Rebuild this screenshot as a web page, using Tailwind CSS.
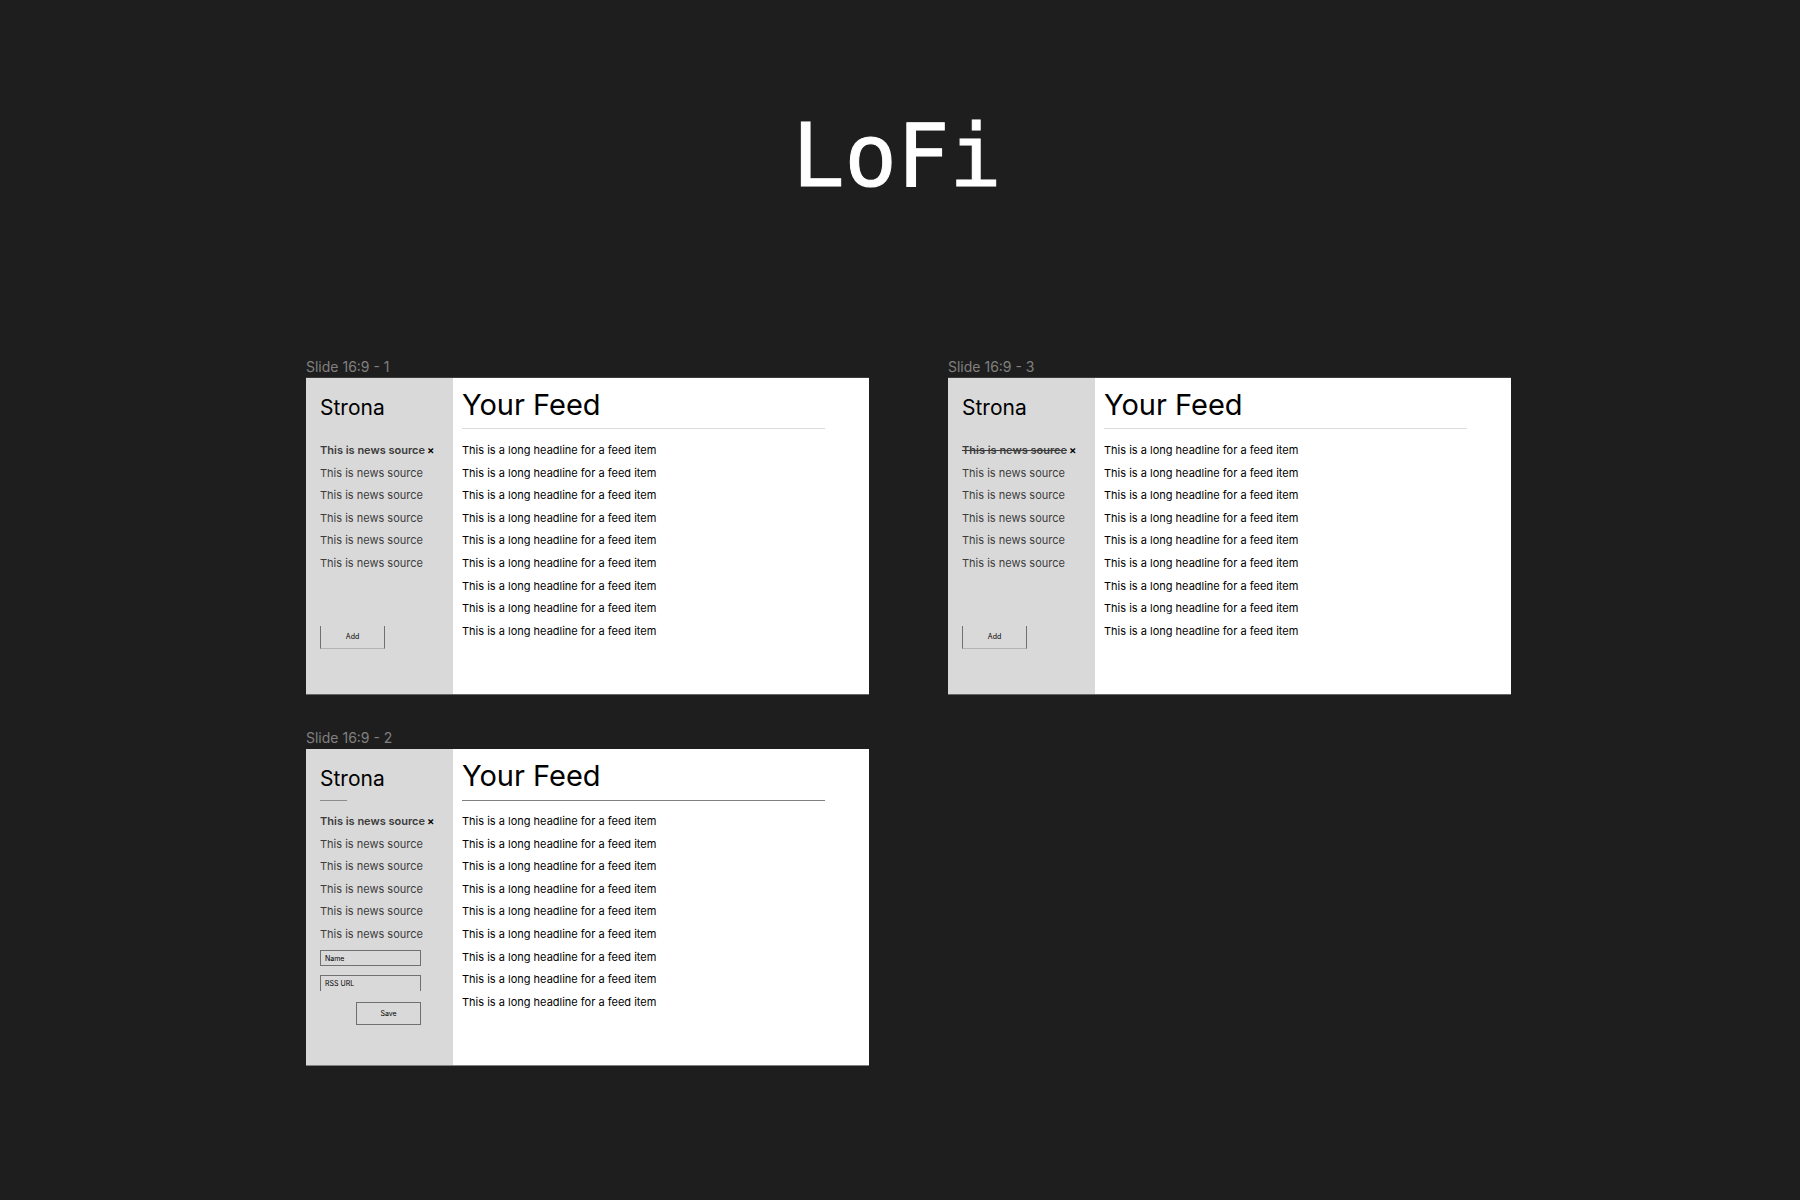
<!DOCTYPE html>
<html lang="en">
<head>
<meta charset="utf-8">
<meta name="viewport" content="width=device-width, initial-scale=1">
<title>LoFi</title>
<script src="https://cdn.jsdelivr.net/npm/@tailwindcss/browser@4"></script>
</head>
<body class="min-h-screen bg-[#1e1e1e] font-['Inter',sans-serif] text-black">
<header class="pt-[106px] pr-[6px] text-center">
  <h1 class="font-['DejaVu_Sans_Mono',monospace] text-[87px] leading-[100px] text-white [-webkit-text-stroke:1px_white]">LoFi</h1>
</header>
<main class="grid grid-cols-2 gap-x-[79px] gap-y-[33px] pt-[150px] pr-[289px] pb-16 pl-[17%]">

  <section>
    <h2 class="h-[22px] text-[14px] leading-[22px] text-[#808080]">Slide 16:9 - 1</h2>
    <div class="flex h-[316px] bg-white shadow-[0_1px_0_#666,0_-1px_0_#3c3c3c]">
      <aside class="w-[147px] shrink-0 bg-[#d9d9d9] pl-[14px]">
        <h3 class="h-[61px] pt-[15px] text-[21px] leading-[30px]">Strona</h3>
        <ul class="grid h-[135px] grid-rows-6 items-center text-[11px] leading-[22px] text-[#3c3c3c]">
          <li class="flex items-center gap-0.5 font-semibold">This is news source <button type="button" aria-label="Remove source" class="font-semibold text-black">×</button></li>
          <li>This is news source</li>
          <li>This is news source</li>
          <li>This is news source</li>
          <li>This is news source</li>
          <li>This is news source</li>
        </ul>
        <button type="button" class="mt-[52px] block h-[23px] w-[65px] border border-t-0 border-[#707070] border-b-[#b4b4b4] text-[7px] leading-[20px]">Add</button>
      </aside>
      <div class="flex-1 pr-[44px] pl-[9px]">
        <h3 class="h-[51px] border-b border-[#dcdcdc] pt-[7px] text-[29px] leading-[40px]">Your Feed</h3>
        <ul class="mt-[10px] grid h-[203px] grid-rows-9 items-center text-[11px] leading-[22px]">
          <li>This is a long headline for a feed item</li>
          <li>This is a long headline for a feed item</li>
          <li>This is a long headline for a feed item</li>
          <li>This is a long headline for a feed item</li>
          <li>This is a long headline for a feed item</li>
          <li>This is a long headline for a feed item</li>
          <li>This is a long headline for a feed item</li>
          <li>This is a long headline for a feed item</li>
          <li>This is a long headline for a feed item</li>
        </ul>
      </div>
    </div>
  </section>

  <section>
    <h2 class="h-[22px] text-[14px] leading-[22px] text-[#808080]">Slide 16:9 - 3</h2>
    <div class="flex h-[316px] bg-white shadow-[0_1px_0_#666,0_-1px_0_#3c3c3c]">
      <aside class="w-[147px] shrink-0 bg-[#d9d9d9] pl-[14px]">
        <h3 class="h-[61px] pt-[15px] text-[21px] leading-[30px]">Strona</h3>
        <ul class="grid h-[135px] grid-rows-6 items-center text-[11px] leading-[22px] text-[#3c3c3c]">
          <li class="flex items-center gap-0.5 font-semibold"><s>This is news source</s> <button type="button" aria-label="Remove source" class="font-semibold text-black">×</button></li>
          <li>This is news source</li>
          <li>This is news source</li>
          <li>This is news source</li>
          <li>This is news source</li>
          <li>This is news source</li>
        </ul>
        <button type="button" class="mt-[52px] block h-[23px] w-[65px] border border-t-0 border-[#707070] border-b-[#b4b4b4] text-[7px] leading-[20px]">Add</button>
      </aside>
      <div class="flex-1 pr-[44px] pl-[9px]">
        <h3 class="h-[51px] border-b border-[#dcdcdc] pt-[7px] text-[29px] leading-[40px]">Your Feed</h3>
        <ul class="mt-[10px] grid h-[203px] grid-rows-9 items-center text-[11px] leading-[22px]">
          <li>This is a long headline for a feed item</li>
          <li>This is a long headline for a feed item</li>
          <li>This is a long headline for a feed item</li>
          <li>This is a long headline for a feed item</li>
          <li>This is a long headline for a feed item</li>
          <li>This is a long headline for a feed item</li>
          <li>This is a long headline for a feed item</li>
          <li>This is a long headline for a feed item</li>
          <li>This is a long headline for a feed item</li>
        </ul>
      </div>
    </div>
  </section>

  <section>
    <h2 class="h-[22px] text-[14px] leading-[22px] text-[#808080]">Slide 16:9 - 2</h2>
    <div class="flex h-[316px] bg-white shadow-[0_1px_0_#808080]">
      <aside class="w-[147px] shrink-0 bg-[#d9d9d9] pl-[14px]">
        <h3 class="h-[51px] pt-[15px] text-[21px] leading-[30px]">Strona</h3>
        <hr class="w-[27px] border-[#8c8c8c]">
        <ul class="mt-[9px] grid h-[135px] grid-rows-6 items-center text-[11px] leading-[22px] text-[#3c3c3c]">
          <li class="flex items-center gap-0.5 font-semibold">This is news source <button type="button" aria-label="Remove source" class="font-semibold text-black">×</button></li>
          <li>This is news source</li>
          <li>This is news source</li>
          <li>This is news source</li>
          <li>This is news source</li>
          <li>This is news source</li>
        </ul>
        <form class="flex w-[101px] flex-col pt-[5px]">
          <input type="text" aria-label="Name" placeholder="Name" class="h-[16px] w-full border border-[#707070] px-1 text-[7px] leading-[14px] placeholder:text-black">
          <input type="text" aria-label="RSS URL" placeholder="RSS URL" class="mt-[9px] h-[16px] w-full border border-b-0 border-[#707070] px-1 text-[7px] leading-[14px] placeholder:text-black">
          <button type="button" class="mt-[11px] h-[23px] w-[65px] self-end border border-[#707070] text-[7px] leading-[20px]">Save</button>
        </form>
      </aside>
      <div class="flex-1 pr-[44px] pl-[9px]">
        <h3 class="h-[52px] border-b border-[#7f7f7f] pt-[7px] text-[29px] leading-[40px]">Your Feed</h3>
        <ul class="mt-[9px] grid h-[203px] grid-rows-9 items-center text-[11px] leading-[22px]">
          <li>This is a long headline for a feed item</li>
          <li>This is a long headline for a feed item</li>
          <li>This is a long headline for a feed item</li>
          <li>This is a long headline for a feed item</li>
          <li>This is a long headline for a feed item</li>
          <li>This is a long headline for a feed item</li>
          <li>This is a long headline for a feed item</li>
          <li>This is a long headline for a feed item</li>
          <li>This is a long headline for a feed item</li>
        </ul>
      </div>
    </div>
  </section>
</main>
</body>
</html>
